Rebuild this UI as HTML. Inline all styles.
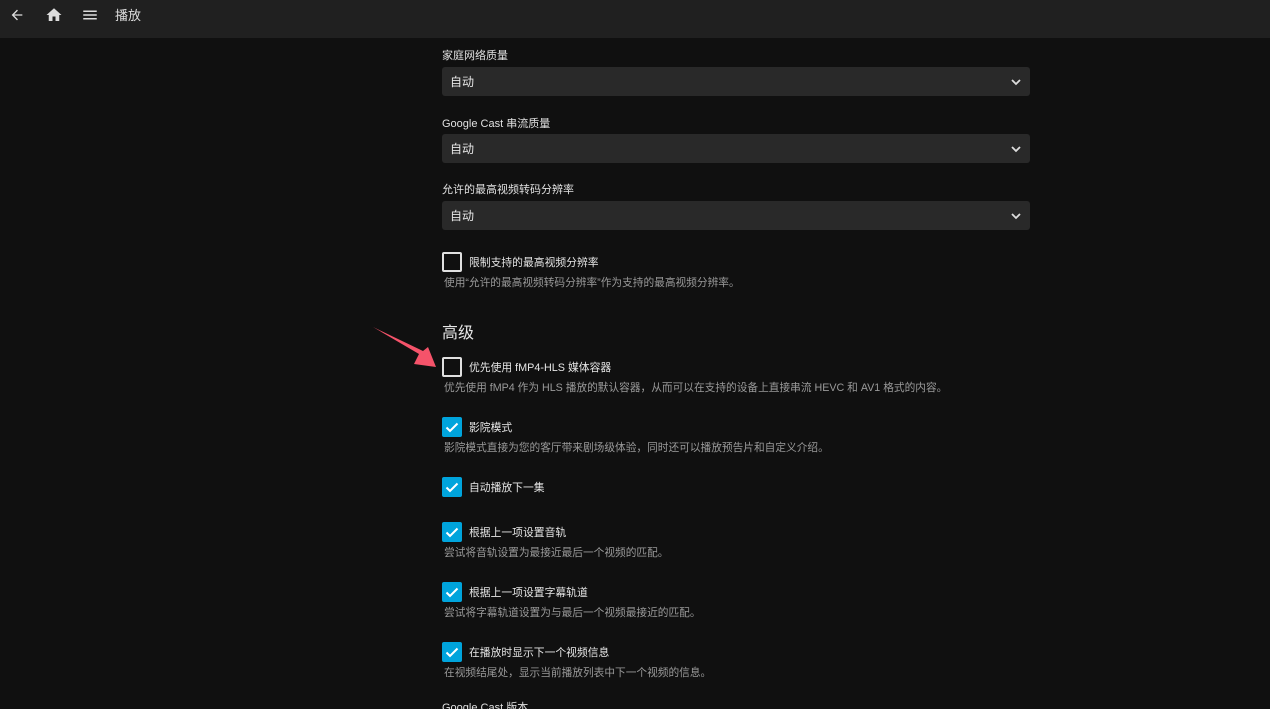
<!DOCTYPE html>
<html><head><meta charset="utf-8"><style>
*{margin:0;padding:0;box-sizing:border-box}
html,body{width:1270px;height:709px;overflow:hidden}
body{background:#101010;font-family:"Liberation Sans","Noto Sans CJK SC",sans-serif;color:#e6e6e6;position:relative}
.hdr{position:absolute;left:0;top:0;width:1270px;height:38px;background:#202020}
.a{position:absolute;white-space:nowrap}
.lbl{font-size:11px;color:#e0e0e0}
.sel{position:absolute;left:442px;width:588px;height:29px;background:#292929;border-radius:3px;font-size:12px;color:#e6e6e6;padding:6px 0 0 8px}
.sel svg{position:absolute;right:8px;top:10px}
.cb{position:absolute;left:442px;width:20px;height:20px;border-radius:2px}
.cb.off{border:2px solid #e0e0e0}
.cb.on{background:#00a4dc}
.ct{font-size:10.8px;color:#e6e6e6;left:469px}
.desc{font-size:10.7px;color:#9a9a9a;left:444px}
</style></head><body>
<div class="hdr">
<svg class="a" style="left:9px;top:7px" width="16" height="16" viewBox="0 0 24 24"><path d="M20 11H7.8l5.6-5.6L12 4l-8 8 8 8 1.4-1.4L7.8 13H20z" fill="#ddd"/></svg>
<svg class="a" style="left:45px;top:6px" width="18" height="18" viewBox="0 0 24 24"><path d="M10 20v-6h4v6h5v-8h3L12 3 2 12h3v8z" fill="#ddd"/></svg>
<svg class="a" style="left:81px;top:6px" width="18" height="18" viewBox="0 0 24 24"><path d="M3 18h18v-2H3zm0-5h18v-2H3zm0-7v2h18V6z" fill="#ddd"/></svg>
<div class="a" style="left:115px;top:5px;font-size:13px;color:#ddd">播放</div>
</div>

<div class="a lbl" style="left:442px;top:47px">家庭网络质量</div>
<div class="sel" style="top:67px">自动<svg width="12" height="10" viewBox="0 0 12 10"><path d="M2 3l4 4 4-4" stroke="#ddd" stroke-width="1.8" fill="none"/></svg></div>
<div class="a lbl" style="left:442px;top:115px">Google Cast 串流质量</div>
<div class="sel" style="top:134px">自动<svg width="12" height="10" viewBox="0 0 12 10"><path d="M2 3l4 4 4-4" stroke="#ddd" stroke-width="1.8" fill="none"/></svg></div>
<div class="a lbl" style="left:442px;top:181px">允许的最高视频转码分辨率</div>
<div class="sel" style="top:201px">自动<svg width="12" height="10" viewBox="0 0 12 10"><path d="M2 3l4 4 4-4" stroke="#ddd" stroke-width="1.8" fill="none"/></svg></div>

<div class="cb off" style="top:252px"></div>
<div class="a ct" style="top:254px">限制支持的最高视频分辨率</div>
<div class="a desc" style="top:275px">使用“允许的最高视频转码分辨率”作为支持的最高视频分辨率。</div>

<div class="a" style="left:442px;top:319px;font-size:16px;color:#e6e6e6">高级</div>

<div class="cb off" style="top:357px"></div>
<div class="a ct" style="top:359px">优先使用 fMP4-HLS 媒体容器</div>
<div class="a desc" style="top:380px">优先使用 fMP4 作为 HLS 播放的默认容器，从而可以在支持的设备上直接串流 HEVC 和 AV1 格式的内容。</div>

<div class="cb on" style="top:417px"><svg width="20" height="20" viewBox="0 0 20 20"><path d="M4.5 10.5l3.5 3.5 7.5-7.5" stroke="#fff" stroke-width="2" fill="none"/></svg></div>
<div class="a ct" style="top:419px">影院模式</div>
<div class="a desc" style="top:440px">影院模式直接为您的客厅带来剧场级体验，同时还可以播放预告片和自定义介绍。</div>

<div class="cb on" style="top:477px"><svg width="20" height="20" viewBox="0 0 20 20"><path d="M4.5 10.5l3.5 3.5 7.5-7.5" stroke="#fff" stroke-width="2" fill="none"/></svg></div>
<div class="a ct" style="top:479px">自动播放下一集</div>

<div class="cb on" style="top:522px"><svg width="20" height="20" viewBox="0 0 20 20"><path d="M4.5 10.5l3.5 3.5 7.5-7.5" stroke="#fff" stroke-width="2" fill="none"/></svg></div>
<div class="a ct" style="top:524px">根据上一项设置音轨</div>
<div class="a desc" style="top:545px">尝试将音轨设置为最接近最后一个视频的匹配。</div>

<div class="cb on" style="top:582px"><svg width="20" height="20" viewBox="0 0 20 20"><path d="M4.5 10.5l3.5 3.5 7.5-7.5" stroke="#fff" stroke-width="2" fill="none"/></svg></div>
<div class="a ct" style="top:584px">根据上一项设置字幕轨道</div>
<div class="a desc" style="top:605px">尝试将字幕轨道设置为与最后一个视频最接近的匹配。</div>

<div class="cb on" style="top:642px"><svg width="20" height="20" viewBox="0 0 20 20"><path d="M4.5 10.5l3.5 3.5 7.5-7.5" stroke="#fff" stroke-width="2" fill="none"/></svg></div>
<div class="a ct" style="top:644px">在播放时显示下一个视频信息</div>
<div class="a desc" style="top:665px">在视频结尾处，显示当前播放列表中下一个视频的信息。</div>

<div class="a lbl" style="left:442px;top:699px">Google Cast 版本</div>

<svg class="a" style="left:0;top:0" width="1270" height="709" viewBox="0 0 1270 709">
<path d="M373 327 L419 354 L414 364 L436 367 L428 347 L423 351 Z" fill="#f5536a"/>
</svg>
</body></html>
